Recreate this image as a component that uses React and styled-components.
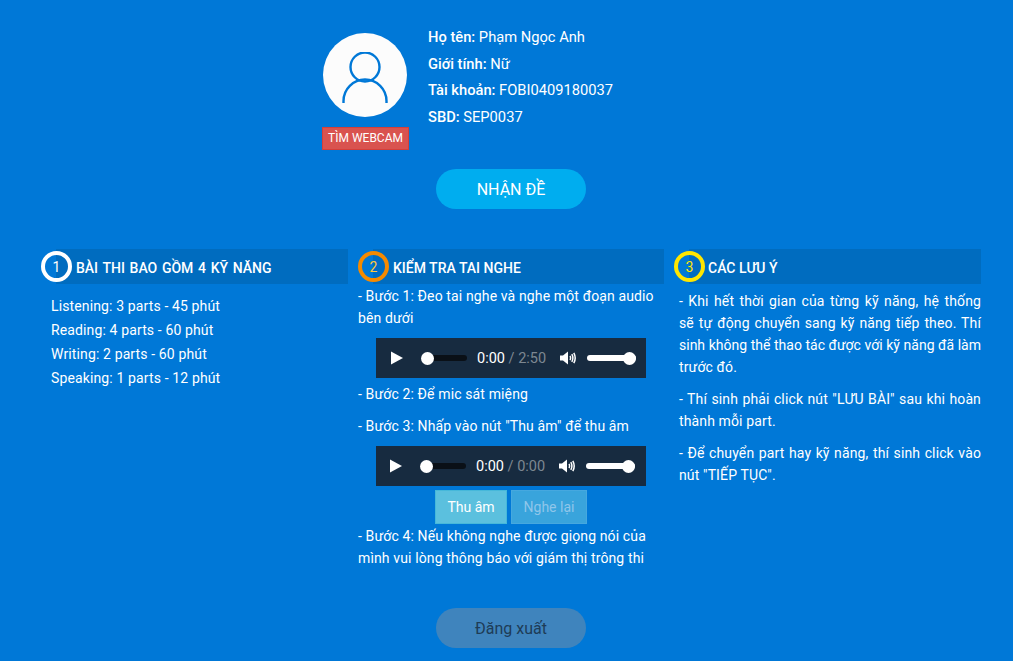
import React from 'react'
import styled, { createGlobalStyle } from 'styled-components'

const Global = createGlobalStyle`
    html, body {
        margin: 0;
        padding: 0;
        background: #0078d7;
        font-family: Roboto, "Noto Sans", sans-serif;
        color: #fff;
    }
`

const Page = styled.div`
    width: 1013px;
    height: 661px;
    overflow: hidden;
    box-sizing: border-box;
    padding: 23px 0 0 9px;
    display: flex;
    flex-direction: column;
    align-items: center;
    background: #0078d7;
`

const Profile = styled.div`
    display: flex;
    width: 378px;
    gap: 19px;
`

const AvatarCol = styled.div`
    display: flex;
    flex-direction: column;
    align-items: flex-start;
    gap: 10px;
    padding-top: 10px;
    width: 87px;
`

const Avatar = styled.div`
    width: 84px;
    height: 84px;
    margin-left: 1px;
    box-sizing: border-box;
    padding-top: 5px;
    border-radius: 50%;
    background: #fcfcfc;
    display: flex;
    align-items: center;
    justify-content: center;
`

const WebcamButton = styled.div`
    width: 87px;
    height: 23px;
    box-sizing: border-box;
    background: #d9534f;
    border: 1px solid #d43f3a;
    font-size: 12px;
    line-height: 21px;
    text-align: center;
    white-space: nowrap;
`

const Info = styled.div`
    padding-top: 1px;
    font-size: 14.7px;
    line-height: 26.6px;
    white-space: nowrap;
`

const InfoRow = styled.div`
    & b {
        font-weight: 500;
    }
`

const Pill = styled.div`
    width: 150px;
    height: 40px;
    margin-top: ${p => p.$top || 0}px;
    border-radius: 20px;
    display: flex;
    align-items: center;
    justify-content: center;
    font-size: 16px;
    background: ${p => p.$muted ? '#3f84bd' : '#00adef'};
    color: ${p => p.$muted ? '#1e3c57' : '#fff'};
`

const Columns = styled.div`
    display: flex;
    align-self: flex-start;
    margin: 40px 0 0 32px;
    height: 359px;
`

const Column = styled.div`
    width: ${p => p.$width}px;
    margin-right: ${p => p.$gap || 0}px;
`

const Heading = styled.div`
    height: 35px;
    box-sizing: border-box;
    background: #006cbf;
    display: flex;
    align-items: center;
    font-size: 14px;
    font-weight: 500;
    word-spacing: ${p => p.$words || 0}px;
    margin-left: ${p => p.$inset}px;
    gap: ${p => p.$gap}px;
`

const HeadingText = styled.span`
    padding-top: 2px;
`

const Badge = styled.span`
    width: 31px;
    height: 31px;
    margin-left: -15px;
    box-sizing: border-box;
    border-radius: 50%;
    border: 4px solid ${p => p.$color};
    color: ${p => p.$text || p.$color};
    display: flex;
    align-items: center;
    justify-content: center;
    font-size: 14px;
    font-weight: 400;
`

const SkillList = styled.div`
    padding: 10px 0 0 10px;
    font-size: 14px;
    letter-spacing: 0.13px;
    line-height: 24px;
`

const StepText = styled.p`
    margin: 0;
    font-size: 14px;
    letter-spacing: 0.13px;
    line-height: 22px;
    padding-top: ${p => p.$top || 0}px;
`

const Notes = styled.div`
    padding: 6px 0 0 15px;
    font-size: 14px;
    letter-spacing: 0.13px;
    line-height: 22px;
    text-align: justify;
`

const Note = styled.p`
    margin: 0 0 10px;
`

const NoteLine = styled.span`
    display: block;
    white-space: nowrap;
    text-align-last: ${p => p.$last ? 'left' : 'justify'};
    ${p => p.$tight && 'letter-spacing: 0;'}
`

const Player = styled.div`
    width: 270px;
    height: 40px;
    margin: ${p => p.$margin};
    background: #172b40;
    display: flex;
    align-items: center;
    box-sizing: border-box;
    padding-left: ${p => p.$pad}px;
    font-size: 14.5px;
`

const Track = styled.div`
    position: relative;
    height: 6px;
    width: ${p => p.$width}px;
    margin-left: ${p => p.$left}px;
    border-radius: 3px;
    background: ${p => p.$fill ? '#fff' : '#0a1017'};
`

const Knob = styled.span`
    position: absolute;
    top: -3.5px;
    width: 13px;
    height: 13px;
    border-radius: 50%;
    background: #fff;
    ${p => p.$end ? 'right: 0;' : 'left: 0;'}
`

const Time = styled.span`
    margin-left: 10px;
    width: 83px;
    white-space: nowrap;
    & i {
        font-style: normal;
        color: #7d8791;
    }
`

const RecordRow = styled.div`
    display: flex;
    justify-content: center;
    gap: 4px;
    margin: 4px 0 1px;
`

const RecordButton = styled.div`
    height: 34px;
    width: ${p => p.$width}px;
    box-sizing: border-box;
    display: flex;
    align-items: center;
    justify-content: center;
    font-size: 14px;
    background: ${p => p.$off ? '#39a4dc' : '#5bc0de'};
    border: 1px solid ${p => p.$off ? '#46a8df' : '#46b8da'};
    color: ${p => p.$off ? '#8fc6ea' : '#fff'};
`

const PlayIcon = () => (
    <svg width="14" height="16" viewBox="0 0 14 16"><path d="M1 1.5 L13 8 L1 14.5 Z" fill="#fff" /></svg>
)

const VolumeIcon = () => (
    <svg width="17" height="16" viewBox="0 0 17 16" fill="none">
        <path d="M0 5.5 H3 L8 1.5 V14.5 L3 10.5 H0 Z" fill="#fff" />
        <path d="M10 6 Q11.2 8 10 10 M11.8 4.2 Q14 8 11.8 11.8 M13.8 2.8 Q16.6 8 13.8 13.2" stroke="#fff" strokeWidth="1.5" />
    </svg>
)

function AudioPlayer({ time, total, margin, pad }) {
    return (
        <Player $margin={margin} $pad={pad}>
            <PlayIcon />
            <Track $width={46} $left={17}><Knob /></Track>
            <Time>{time} <i>/ {total}</i></Time>
            <VolumeIcon />
            <Track $width={49} $left={10} $fill><Knob $end /></Track>
        </Player>
    )
}

export default function App() {
    return (
        <Page>
            <Global />
            <Profile>
                <AvatarCol>
                    <Avatar>
                        <svg width="46" height="51" viewBox="0 0 46 51" fill="none" stroke="#0078d7" strokeWidth="2.4">
                            <circle cx="23" cy="15" r="14.5" />
                            <path d="M1.5 51 V49 A21.5 21.5 0 0 1 44.5 49 V51" />
                        </svg>
                    </Avatar>
                    <WebcamButton>TÌM WEBCAM</WebcamButton>
                </AvatarCol>
                <Info>
                    <InfoRow><b>Họ tên:</b> Phạm Ngọc Anh</InfoRow>
                    <InfoRow><b>Giới tính:</b> Nữ</InfoRow>
                    <InfoRow><b>Tài khoản:</b> FOBI0409180037</InfoRow>
                    <InfoRow><b>SBD:</b> SEP0037</InfoRow>
                </Info>
            </Profile>
            <Pill $top={19}>NHẬN ĐỀ</Pill>
            <Columns>
                <Column $width={307} $gap={10}>
                    <Heading $inset={15} $gap={4} $words={1.2}><Badge $color="#fff">1</Badge><HeadingText>BÀI THI BAO GỒM 4 KỸ NĂNG</HeadingText></Heading>
                    <SkillList>
                        <div>Listening: 3 parts - 45 phút</div>
                        <div>Reading: 4 parts - 60 phút</div>
                        <div>Writing: 2 parts - 60 phút</div>
                        <div>Speaking: 1 parts - 12 phút</div>
                    </SkillList>
                </Column>
                <Column $width={306}>
                    <Heading $inset={15} $gap={4}><Badge $color="#f58a00" $text="#ffc83d">2</Badge><HeadingText>KIỂM TRA TAI NGHE</HeadingText></Heading>
                    <StepText $top={1}>- Bước 1: Đeo tai nghe và nghe một đoạn audio bên dưới</StepText>
                    <AudioPlayer time="0:00" total="2:50" margin="9px 0 5px 18px" pad={14} />
                    <StepText>- Bước 2: Để mic sát miệng</StepText>
                    <StepText $top={10}>- Bước 3: Nhấp vào nút "Thu âm" để thu âm</StepText>
                    <AudioPlayer time="0:00" total="0:00" margin="9px 0 0 18px" pad={13} />
                    <RecordRow>
                        <RecordButton $width={72}>Thu âm</RecordButton>
                        <RecordButton $width={76} $off>Nghe lại</RecordButton>
                    </RecordRow>
                    <StepText>- Bước 4: Nếu không nghe được giọng nói của mình vui lòng thông báo với giám thị trông thi</StepText>
                </Column>
                <Column $width={317}>
                    <Heading $inset={25} $gap={3}><Badge $color="#ffe600">3</Badge><HeadingText>CÁC LƯU Ý</HeadingText></Heading>
                    <Notes>
                        <Note>
                            <NoteLine>- Khi hết thời gian của từng kỹ năng, hệ thống</NoteLine>
                            <NoteLine>sẽ tự động chuyển sang kỹ năng tiếp theo. Thí</NoteLine>
                            <NoteLine $tight>sinh không thể thao tác được với kỹ năng đã làm</NoteLine>
                            <NoteLine $last>trước đó.</NoteLine>
                        </Note>
                        <Note>- Thí sinh phải click nút "LƯU BÀI" sau khi hoàn thành mỗi part.</Note>
                        <Note>- Để chuyển part hay kỹ năng, thí sinh click vào nút "TIẾP TỤC".</Note>
                    </Notes>
                </Column>
            </Columns>
            <Pill $muted>Đăng xuất</Pill>
        </Page>
    )
}
